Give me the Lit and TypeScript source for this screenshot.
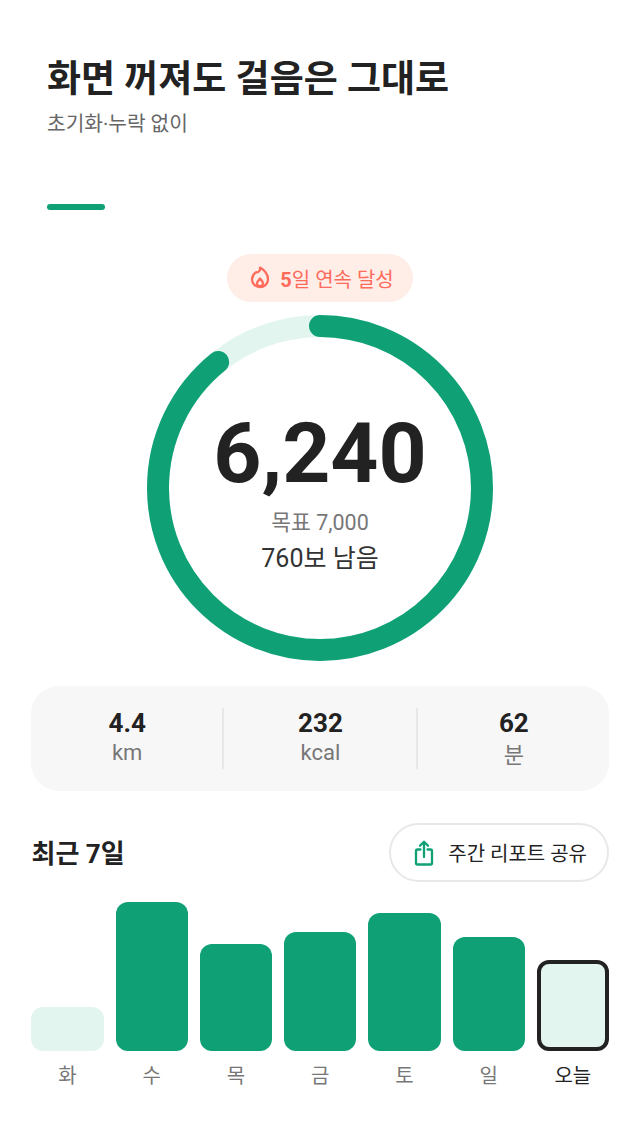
import { LitElement, html, css, svg } from "lit";
import { customElement } from "lit/decorators.js";

const days = [
  { l: "화", h: 44, c: "pale" },
  { l: "수", h: 149, c: "" },
  { l: "목", h: 107, c: "" },
  { l: "금", h: 119, c: "" },
  { l: "토", h: 138, c: "" },
  { l: "일", h: 114, c: "" },
  { l: "오늘", h: 91, c: "today" },
];

@customElement("app-root")
export class AppRoot extends LitElement {
  static styles = css`
    :host {
      display: block;
      width: 640px;
      height: 1138px;
      background: #fff;
      overflow: hidden;
      font-family: Roboto, "Noto Sans CJK KR", sans-serif;
      color: #222;
    }
    .head { padding: 55px 47px 0; }
    h1 { margin: 0; font-size: 37px; line-height: 50px; font-weight: 700; color: #222; }
    .sub { margin-top: 5px; font-size: 20.3px; line-height: 28px; color: #666; }
    .accent { width: 58px; height: 6px; border-radius: 3px; background: #0fa076; margin-top: 66px; }
    .center { display: flex; flex-direction: column; align-items: center; margin-top: 44px; }
    .pill {
      display: flex; align-items: center; gap: 10px;
      height: 48px; padding: 0 19px 0 23px; border-radius: 24px;
      background: #ffede8; color: #ff6b5b; font-size: 20px; font-weight: 400;
    }
    .pill b { font-weight: 700; }
    .pill svg { display: block; }
    .ring { position: relative; width: 346px; height: 346px; margin-top: 13px; }
    .ring svg { display: block; }
    .ring-text {
      position: absolute; inset: 0; display: flex; flex-direction: column; align-items: center;
    }
    .num { margin-top: 89px; font-size: 84px; line-height: 100px; font-weight: 700; color: #222; }
    .goal { margin-top: 4px; font-size: 21.5px; line-height: 30px; color: #777; }
    .left { margin-top: 3px; font-size: 25px; line-height: 36px; color: #333; }
    .stats {
      display: flex; align-items: flex-start;
      margin: 25px 31px 0; height: 105px; padding: 22px 0; box-sizing: border-box;
      background: #f7f7f7; border-radius: 28px;
    }
    .stat { flex: 1; display: flex; flex-direction: column; align-items: center; padding-left: 1px; }
    .div { width: 2px; height: 61px; background: #e8e8e8; }
    .stat b { font-size: 26px; line-height: 30px; font-weight: 700; color: #222; }
    .stat span { font-size: 22px; line-height: 30px; color: #777; }
    .stat span.ko { margin-top: 3px; }
    .row { display: flex; justify-content: space-between; align-items: center; margin: 32px 31px 0 31.500px; }
    h2 { margin: 2px 0 0; font-size: 26px; line-height: 40px; font-weight: 700; color: #222; }
    .share {
      display: flex; align-items: center; gap: 14px; box-sizing: border-box;
      height: 59px; padding: 0 20px 0 23px; border: 2px solid #e8e8e8; border-radius: 30px;
      background: #fff; font-size: 20px; color: #222;
    }
    .share svg { display: block; }
    .chart { display: grid; grid-template-columns: repeat(7, 1fr); gap: 12px; margin: 19px 31px 0 31.300px; }
    .col { display: flex; flex-direction: column; align-items: center; }
    .barbox { height: 150px; width: 100%; display: flex; align-items: flex-end; }
    .bar { width: 100%; box-sizing: border-box; border-radius: 12px; background: #0fa076; }
    .bar.pale { background: #e2f5ee; }
    .bar.today { background: #e2f5ee; border: 4px solid #222; }
    .lbl { margin-top: 11px; font-size: 20px; line-height: 28px; color: #777; }
    .lbl.today { color: #222; }
  `;

  render() {
    const r = 162;
    const circ = 2 * Math.PI * r;
    const prog = (6240 / 7000) * circ;
    return html`
      <div class="head">
        <h1>화면 꺼져도 걸음은 그대로</h1>
        <div class="sub">초기화·누락 없이</div>
        <div class="accent"></div>
      </div>
      <div class="center">
        <div class="pill">
          <svg width="20" height="24" viewBox="0 0 20 24" fill="none" stroke="#ff6b5b" stroke-width="2.3" stroke-linejoin="round" stroke-linecap="round">
            <path d="M10 1.600C10.600 4.200 8.600 6.800 6.200 6.200 3.600 8.200 2 10.800 2 13.500a8 7.500 0 0 0 16 0C18 8.800 14.500 4.200 10 1.600Z" />
            <path d="M10 12.500C9.400 14 7 15.200 7 17.200a3 3 0 0 0 6 0C13 15.200 10.700 14 10 12.500Z" />
          </svg>
          <span><b>5</b>일 연속 달성</span>
        </div>
        <div class="ring">
          <svg width="346" height="346" viewBox="0 0 346 346">
            <circle cx="173" cy="173" r="${r}" fill="none" stroke="#e2f5ee" stroke-width="22" />
            ${svg`<circle cx="173" cy="173" r="${r}" fill="none" stroke="#0fa076" stroke-width="22" stroke-linecap="round"
              stroke-dasharray="${prog} ${circ}" transform="rotate(-90 173 173)" />`}
          </svg>
          <div class="ring-text">
            <div class="num">6,240</div>
            <div class="goal">목표 7,000</div>
            <div class="left">760보 남음</div>
          </div>
        </div>
      </div>
      <div class="stats">
        <div class="stat"><b>4.4</b><span>km</span></div>
        <div class="div"></div>
        <div class="stat"><b>232</b><span>kcal</span></div>
        <div class="div"></div>
        <div class="stat"><b>62</b><span class="ko">분</span></div>
      </div>
      <div class="row">
        <h2>최근 7일</h2>
        <div class="share">
          <svg width="20" height="26" viewBox="0 0 20 26" fill="none" stroke="#0fa076" stroke-width="2.3" stroke-linecap="round" stroke-linejoin="round">
            <path d="M6.500 9.500H3.500A1.500 1.500 0 0 0 2 11v12a1.500 1.500 0 0 0 1.500 1.500h13A1.500 1.500 0 0 0 18 23V11a1.500 1.500 0 0 0-1.500-1.500h-3" />
            <path d="M10 17V1.800M6 5.800l4-4 4 4" />
          </svg>
          <span>주간 리포트 공유</span>
        </div>
      </div>
      <div class="chart">
        ${days.map(
          (d) => html`<div class="col">
            <div class="barbox"><div class="bar ${d.c}" style="height:${d.h}px"></div></div>
            <div class="lbl ${d.c === "today" ? "today" : ""}">${d.l}</div>
          </div>`
        )}
      </div>
    `;
  }
}
